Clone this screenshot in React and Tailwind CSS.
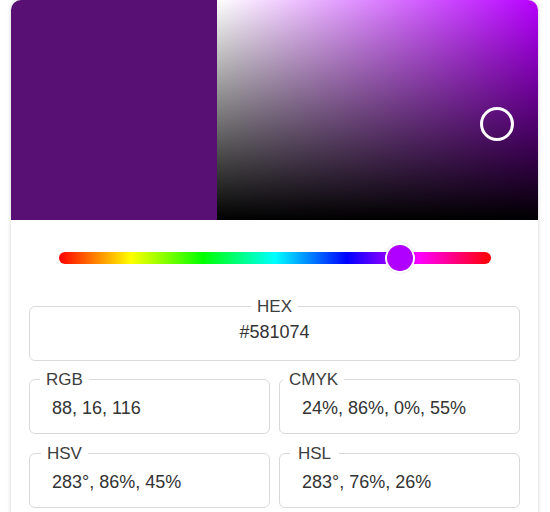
import React from "react";

function Field({ label, value, legendClass, valueClass, center }) {
  return (
    <fieldset
      className={
        "border border-[#d9d9d9] rounded-[6px] p-0 m-0 min-w-0 " +
        (center ? "pb-[16px]" : "pb-[13px]")
      }
    >
      <legend
        className={
          "text-[17px] leading-[19px] text-[#3d3d3d] " + legendClass
        }
      >
        {label}
      </legend>
      <div
        className={
          "text-[18px] leading-[24px] text-[#333333] " + valueClass
        }
      >
        {value}
      </div>
    </fieldset>
  );
}

export default function App() {
  return (
    <div
      className="bg-white min-h-[540px] pl-[11px] pr-[12px]"
      style={{ fontFamily: '"Liberation Sans", Arial, sans-serif' }}
    >
      <div className="w-[527px] bg-white rounded-t-[10px] overflow-hidden shadow-[0_0_4px_rgba(0,0,0,0.18)] pb-[30px]">
        <div className="flex h-[220px]">
          <div className="w-[206px] bg-[#581074]" />
          <div className="relative flex-1 bg-[linear-gradient(to_top,#000000,rgba(0,0,0,0)),linear-gradient(to_right,#ffffff,#b700ff)]">
            <div className="absolute left-[263px] top-[107px] w-[34px] h-[34px] rounded-full border-[3px] border-white" />
          </div>
        </div>

        <div className="mt-[23px] pl-[48px] pr-[47px]">
          <div className="relative h-[30px] flex items-center">
            <div className="w-full h-[12px] rounded-full bg-[linear-gradient(to_right,#ff0000,#ffff00,#00ff00,#00ffff,#0000ff,#ff00ff,#ff0000)]" />
            <div className="absolute left-[326px] top-0 w-[30px] h-[30px] rounded-full bg-[#b000ff] border-2 border-white shadow-[0_0_2px_rgba(0,0,0,0.15)]" />
          </div>
        </div>

        <div className="px-[18px] mt-[24px]">
          <Field
            label="HEX"
            value="#581074"
            legendClass="mx-auto px-[6px]"
            valueClass="text-center pt-[4px]"
            center
          />
          <div className="grid grid-cols-2 gap-x-[9px] gap-y-[10px] mt-[9px]">
            <Field
              label="RGB"
              value="88, 16, 116"
              legendClass="ml-[10px] px-[6px]"
              valueClass="pl-[22px] pt-[7px]"
            />
            <Field
              label="CMYK"
              value="24%, 86%, 0%, 55%"
              legendClass="ml-[3px] px-[6px]"
              valueClass="pl-[22px] pt-[7px]"
            />
            <Field
              label="HSV"
              value="283°, 86%, 45%"
              legendClass="ml-[11px] px-[6px]"
              valueClass="pl-[22px] pt-[7px]"
            />
            <Field
              label="HSL"
              value="283°, 76%, 26%"
              legendClass="ml-[10px] px-[8px]"
              valueClass="pl-[22px] pt-[7px]"
            />
          </div>
        </div>
      </div>
    </div>
  );
}
